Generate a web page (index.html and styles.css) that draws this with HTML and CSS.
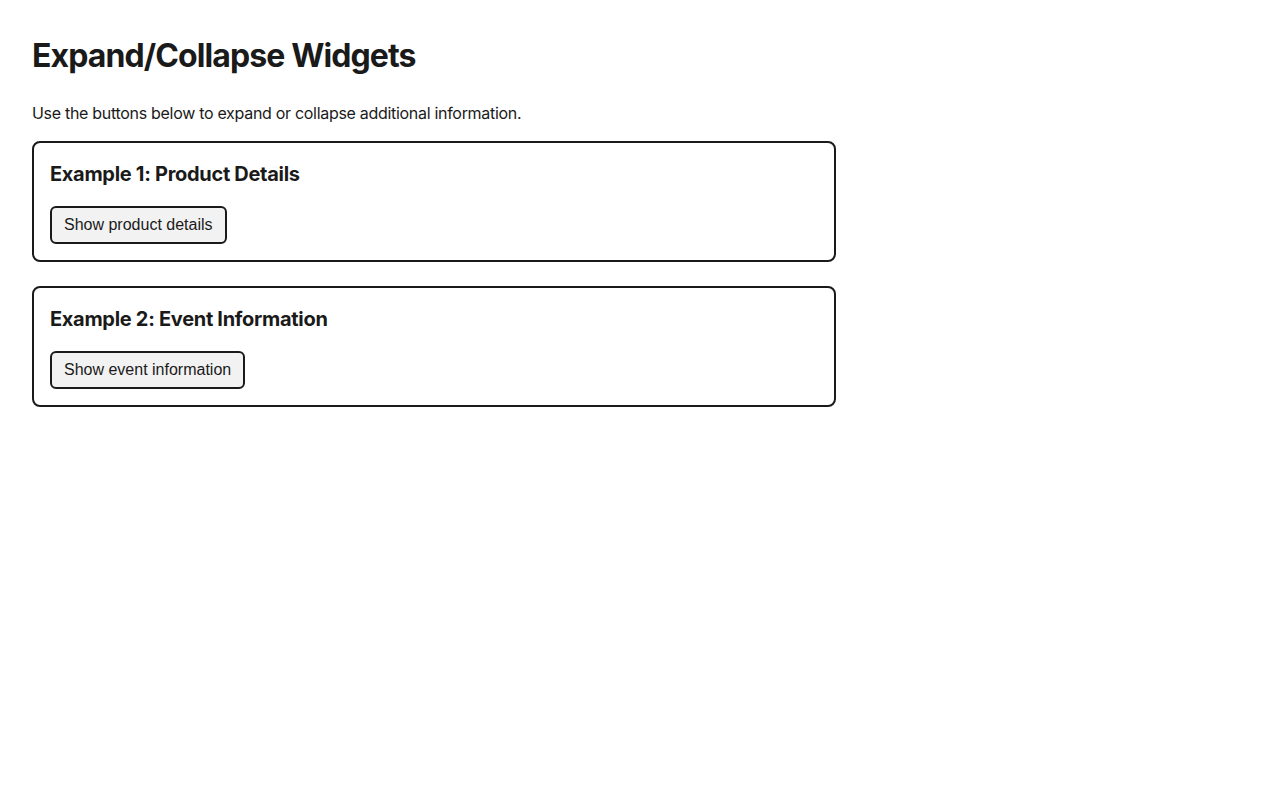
FILE: index.html
```html
<!DOCTYPE html>
<html lang="en">
<head>
<meta charset="utf-8">
<title>Expand/Collapse Widgets</title>
<link rel="stylesheet" href="styles.css">
</head>
<body>
<main class="page">
  <h1 class="title">Expand/Collapse Widgets</h1>
  <p class="intro">Use the buttons below to expand or collapse additional information.</p>
  <section class="card">
    <h2 class="card-title">Example 1: Product Details</h2>
    <button class="toggle" type="button" aria-expanded="false">Show product details</button>
  </section>
  <section class="card">
    <h2 class="card-title">Example 2: Event Information</h2>
    <button class="toggle" type="button" aria-expanded="false">Show event information</button>
  </section>
</main>
</body>
</html>
```
FILE: styles.css
```css
* { box-sizing: border-box; }
html, body { margin: 0; padding: 0; background: #fff; }
body {
  font-family: Inter, "Noto Sans", "Liberation Sans", sans-serif;
  color: #1a1a1a;
  font-size: 16px;
  line-height: 1.5;
}
.page {
  padding: 32px;
  max-width: 868px;
}
.title {
  font-size: 32px;
  font-weight: 700;
  line-height: 48px;
  margin: 0 0 21px;
  letter-spacing: -0.9px;
}
.intro {
  margin: 0 0 16px;
  line-height: 24px;
  letter-spacing: -0.3px;
}
.card {
  border: 2px solid #1a1a1a;
  border-radius: 8px;
  padding: 16px;
  margin-bottom: 24px;
}
.card-title {
  font-size: 20px;
  font-weight: 700;
  line-height: 30px;
  margin: 0 0 17px;
  letter-spacing: -0.3px;
}
.toggle {
  font-family: "Liberation Sans", Arial, sans-serif;
  font-size: 16px;
  line-height: 22px;
  color: #1a1a1a;
  background: #f2f2f2;
  border: 2px solid #1a1a1a;
  border-radius: 6px;
  padding: 6px 12px;
  cursor: pointer;
  display: block;
}
```
